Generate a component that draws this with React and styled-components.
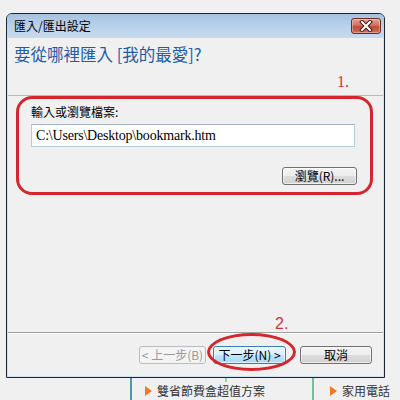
import React from 'react';
import styled, { createGlobalStyle } from 'styled-components';

const GlobalStyle = createGlobalStyle`
  html, body {
    margin: 0;
    padding: 0;
    background: #f0f0f0;
  }
  body {
    font-family: "Noto Sans CJK TC", "Liberation Sans", sans-serif;
    color: #000;
  }
`;

const Page = styled.div`
  width: 400px;
  height: 400px;
  overflow: hidden;
  box-sizing: border-box;
  padding-top: 13px;
  background: #f0f0f0;
`;

const Window = styled.div`
  width: 379px;
  height: 365px;
  margin-left: 6px;
  box-sizing: border-box;
  border: 1px solid #1c2630;
  border-radius: 6px 6px 0 0;
  background: #cfe0f2;
  padding: 0 1px 1px 1px;
  display: flex;
  flex-direction: column;
`;

const TitleBar = styled.div`
  height: 24px;
  flex: none;
  margin: 0 -1px;
  border-radius: 5px 5px 0 0;
  background: linear-gradient(#a7c2e0, #bcd3ec 60%, #c6daef);
  display: flex;
  align-items: center;
  justify-content: space-between;
  padding: 0 3px 0 7px;
`;

const Title = styled.span`
  font-size: 12px;
  line-height: 14px;
`;

const CloseButton = styled.div`
  width: 30px;
  height: 16px;
  box-sizing: border-box;
  border: 1px solid #6b2a24;
  border-radius: 3px;
  background: linear-gradient(#e4a08f, #cf7262 45%, #bf4a38 55%, #d0705c);
  display: flex;
  align-items: center;
  justify-content: center;
  box-shadow: inset 0 0 0 1px rgba(255, 255, 255, 0.35);
`;

const Client = styled.div`
  flex: 1;
  background: #f0f0f0;
  display: flex;
  flex-direction: column;
  position: relative;
`;

const Header = styled.div`
  height: 58px;
  flex: none;
  padding: 6px 0 0 6px;
  box-sizing: border-box;
  border-bottom: 1px solid #b9b9b9;
  position: relative;
`;

const Heading = styled.h1`
  margin: 0;
  font-size: 16.5px;
  line-height: 20px;
  font-weight: normal;
  color: #1f5ba8;
`;

const Body = styled.div`
  flex: 1;
  position: relative;
  padding: 9px 0 0 23px;
  box-sizing: border-box;
`;

const Group = styled.div`
  width: 326px;
  display: flex;
  flex-direction: column;
  align-items: flex-start;
`;

const Label = styled.div`
  font-size: 12px;
  line-height: 14px;
`;

const PathInput = styled.div`
  width: 324px;
  height: 23px;
  margin-top: 5px;
  box-sizing: border-box;
  border: 1px solid #b7c9dc;
  border-top-color: #a3b4c6;
  background: #fff;
  padding: 0 4px;
  font-family: "Liberation Serif", serif;
  font-size: 14px;
  line-height: 21px;
  letter-spacing: -0.2px;
`;

const Button = styled.div`
  width: ${({ w }) => w}px;
  height: 18px;
  box-sizing: border-box;
  border: 1px solid ${({ variant }) =>
    variant === 'focus' ? '#3c7fb1' : variant === 'disabled' ? '#b8bcbf' : '#707070'};
  border-radius: 3px;
  background: ${({ variant }) =>
    variant === 'focus'
      ? 'linear-gradient(#eaf6fd, #d9f0fc 50%, #bee6fd 51%, #a7d9f5)'
      : variant === 'disabled'
      ? '#f4f4f4'
      : 'linear-gradient(#f4f4f4, #ececec 50%, #dddddd 51%, #d0d0d0)'};
  color: ${({ variant }) => (variant === 'disabled' ? '#9a9a9a' : '#000')};
  font-size: 12px;
  line-height: 16px;
  text-align: center;
  white-space: nowrap;
  box-shadow: ${({ variant }) =>
    variant === 'disabled' ? 'none' : 'inset 0 0 0 1px rgba(255,255,255,0.6)'};
`;

const BrowseRow = styled.div`
  align-self: flex-end;
  margin-top: 20px;
`;

const Footer = styled.div`
  height: 44px;
  flex: none;
  border-top: 1px solid #a0a0a0;
  box-shadow: inset 0 1px 0 #fff;
  display: flex;
  justify-content: flex-end;
  align-items: flex-start;
  padding: 13px 11px 0 0;
  box-sizing: border-box;
  position: relative;
`;

const ButtonGap = styled.div`
  width: ${({ w }) => w}px;
`;

const RedBox = styled.div`
  position: absolute;
  left: 8px;
  top: 0;
  width: 357px;
  height: 99px;
  box-sizing: border-box;
  border: 3px solid #d6262d;
  border-radius: 16px;
  pointer-events: none;
`;

const RedEllipse = styled.div`
  position: absolute;
  left: 199px;
  top: 0;
  width: 89px;
  height: 38px;
  box-sizing: border-box;
  border: 3px solid #d6262d;
  border-radius: 50%;
  pointer-events: none;
`;

const Note = styled.span`
  position: absolute;
  left: ${({ x }) => x}px;
  top: ${({ y }) => y}px;
  color: #d9303a;
  font-family: ${({ serif }) => (serif ? '"Liberation Serif", serif' : '"Liberation Sans", sans-serif')};
  font-size: 16px;
  line-height: 16px;
`;

const Strip = styled.div`
  height: 22px;
  display: flex;
  align-items: stretch;
  padding-left: 130px;
`;

const StripItem = styled.div`
  border-left: 2px solid ${({ line }) => line};
  width: ${({ w }) => w}px;
  display: flex;
  align-items: center;
  gap: 5px;
  padding: 3px 0 0 ${({ pad }) => pad}px;
  box-sizing: border-box;
  font-size: 12px;
  color: #333;
  position: relative;
`;

const Arrow = styled.span`
  width: 0;
  height: 0;
  border-top: 5px solid transparent;
  border-bottom: 5px solid transparent;
  border-left: 7px solid #ee7a22;
`;

const Tick = styled.span`
  position: absolute;
  left: 93px;
  top: 0;
  width: 2px;
  height: 4px;
  background: #8fd0c0;
`;

const CloseGlyph = () => (
  <svg width="16" height="12" viewBox="0 0 16 12">
    <path d="M4 2 L12 10 M12 2 L4 10" stroke="#4a1a14" strokeWidth="4" strokeLinecap="square" />
    <path d="M4 2 L12 10 M12 2 L4 10" stroke="#fff" strokeWidth="2" strokeLinecap="square" />
  </svg>
);

const App = () => (
  <Page>
    <GlobalStyle />
    <Window>
      <TitleBar>
        <Title>匯入/匯出設定</Title>
        <CloseButton>
          <CloseGlyph />
        </CloseButton>
      </TitleBar>
      <Client>
        <Header>
          <Heading>要從哪裡匯入 [我的最愛]?</Heading>
          <Note x={329} y={36} serif>
            1.
          </Note>
        </Header>
        <Body>
          <Group>
            <Label>輸入或瀏覽檔案:</Label>
            <PathInput>C:\Users\Desktop\bookmark.htm</PathInput>
            <BrowseRow>
              <Button w={75}>瀏覽(R)...</Button>
            </BrowseRow>
          </Group>
          <RedBox />
        </Body>
        <Footer>
          <Note x={267} y={-17}>
            2.
          </Note>
          <Button w={67} variant="disabled">
            &lt; 上一步(B)
          </Button>
          <ButtonGap w={7} />
          <Button w={73} variant="focus">
            下一步(N) &gt;
          </Button>
          <ButtonGap w={14} />
          <Button w={72}>取消</Button>
          <RedEllipse />
        </Footer>
      </Client>
    </Window>
    <Strip>
      <StripItem line="#4d97ad" w={182} pad={13}>
        <Arrow />
        雙省節費盒超值方案
        <Tick />
      </StripItem>
      <StripItem line="#72c196" w={88} pad={16}>
        <Arrow />
        家用電話
      </StripItem>
    </Strip>
  </Page>
);

export default App;
